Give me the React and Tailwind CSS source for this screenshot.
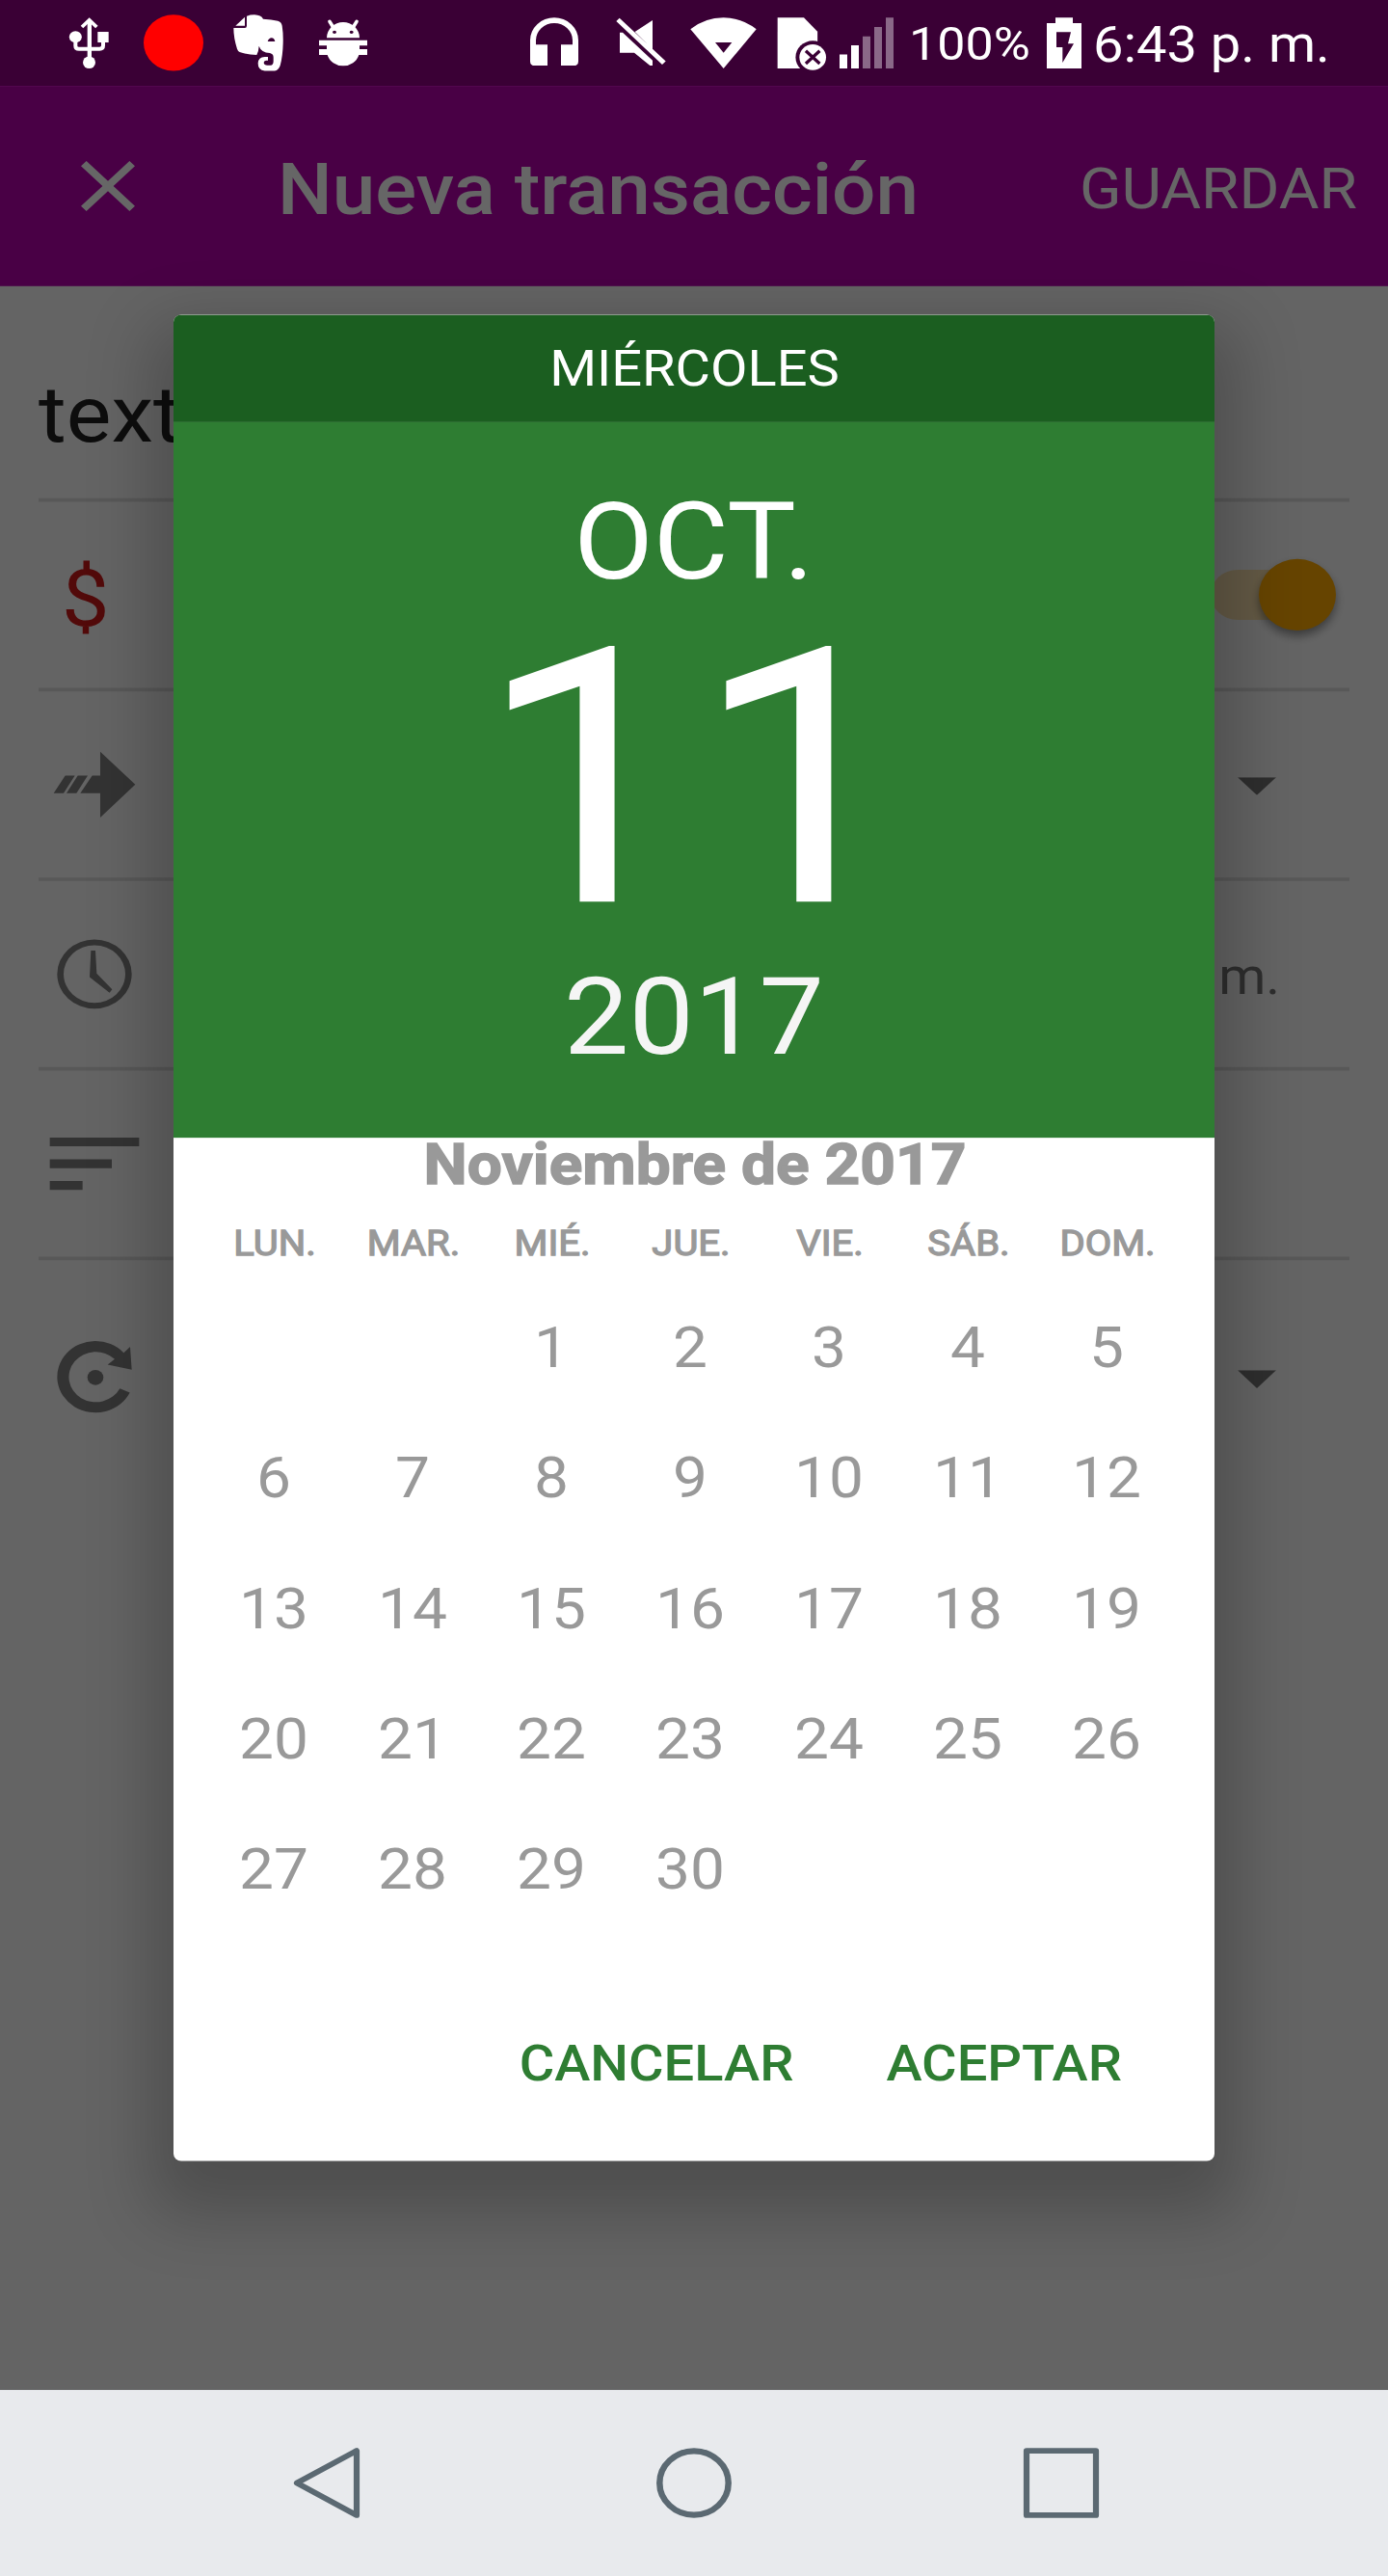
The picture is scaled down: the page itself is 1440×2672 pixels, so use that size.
import React from "react";

const WEEKDAYS = ["LUN.", "MAR.", "MIÉ.", "JUE.", "VIE.", "SÁB.", "DOM."];
const DAYS = [null, null, ...Array.from({ length: 30 }, (_, i) => i + 1)];

function Glyph({ box, className, children }) {
  return (
    <svg viewBox={box} preserveAspectRatio="none" fill="currentColor" className={`shrink-0 ${className}`}>
      {children}
    </svg>
  );
}

function StatusBar() {
  return (
    <div className="flex h-[96px] items-center bg-[#3a0035] pl-[70px] text-white">
      <Glyph box="210 0 135 267" className="h-[96px] w-[45px]">
        <rect x="272" y="66" width="13" height="124" />
        <path d="M255 84L278 62L301 84" fill="none" stroke="currentColor" strokeWidth="11" />
        <ellipse cx="277.500" cy="194" rx="19.500" ry="19" />
        <ellipse cx="235" cy="115" rx="19.500" ry="18" />
        <path d="M235 115V143Q235 152 246 152H310Q321 152 321 142V115" fill="none" stroke="currentColor" strokeWidth="12" />
        <rect x="304" y="99" width="34" height="33" />
      </Glyph>
      <Glyph box="447 0 186 267" className="ml-[34px] h-[96px] w-[62px] text-[#ff0000]">
        <ellipse cx="540" cy="133" rx="93" ry="87" />
      </Glyph>
      <Glyph box="726 0 156 267" className="ml-[31px] h-[96px] w-[52px]">
        <path d="M733 80L762 53V80Z" />
        <path
          fillRule="evenodd"
          d="M768 50Q778 46 792 46Q813 47 819 59Q845 60 865 65Q876 68 878 80Q882 105 881 135Q880 175 872 204Q867 219 855 220H824Q803 218 803 197Q804 177 824 177H834V188H828Q821 189 821 195Q822 203 832 203H842Q851 202 851 190V178Q851 168 840 165Q813 164 806 143Q805 160 799 171Q765 169 746 162Q740 159 738 152Q727 118 727 87H762Q768 87 768 80ZM833 129H856Q854 119 845 118Q837 118 833 129Z"
        />
      </Glyph>
      <Glyph box="990 0 156 267" className="ml-[36px] h-[96px] w-[52px]">
        <path fillRule="evenodd" d="M1017 118A51 49 0 0 1 1119 118ZM1035 100a6 5 0 1 0 12 0a6 5 0 1 0 -12 0ZM1088 100a6 5 0 1 0 12 0a6 5 0 1 0 -12 0Z" />
        <path d="M1026 67L1036 83M1110 67L1100 83" stroke="currentColor" strokeWidth="11" strokeLinecap="round" />
        <path d="M993 125H1143V142H1119V153H1143V171H1117A51 47 0 0 1 1019 171H993V153H1017V142H993Z" />
      </Glyph>

      <Glyph box="210 0 150 267" className="ml-[168px] h-[96px] w-[50px]">
        <path d="M210 190V125A75 70 0 0 1 360 125V190Q360 204 345 204H306V139H342V125A57 53 0 0 0 228 125V139H264V204H225Q210 204 210 190Z" />
      </Glyph>
      <Glyph box="477 0 156 267" className="ml-[39px] h-[96px] w-[52px]">
        <path d="M478 66L488 56L632 190L621 201ZM591 63V153L536 99ZM489 101H498L591 188V204H583L534 164H489Z" />
      </Glyph>
      <Glyph box="709 0 207 267" className="ml-[25px] h-[96px] w-[69px]">
        <path fillRule="evenodd" d="M710 91Q755 55 813 55Q870 55 915 91L813 213ZM787 132H839L813 164Z" />
      </Glyph>
      <Glyph box="976 0 158 267" className="ml-[21px] h-[96px] w-[52px]">
        <path d="M978 55H1061L1104 98V213H978Z" />
        <ellipse cx="1089" cy="178" rx="54" ry="51" fill="#3a0035" />
        <ellipse cx="1089" cy="178" rx="42" ry="40" />
        <path d="M1067 158L1111 198M1111 158L1067 198" stroke="#3a0035" strokeWidth="10" />
      </Glyph>
      <Glyph box="1173 0 168 267" className="ml-[13px] h-[96px] w-[56px]">
        <path d="M1173 169h24v44h-24ZM1209 141h24v72h-24Z" />
        <path fill="#8a6888" d="M1245 113h24v100h-24ZM1281 84h24v129h-24ZM1317 55h24v158h-24Z" />
      </Glyph>
      <span className="ml-[16px] w-[126px] whitespace-nowrap pt-[4px] text-[52px] leading-[92px]">100%</span>
      <Glyph box="378 0 108 267" className="ml-[17px] h-[96px] w-[36px]">
        <path fillRule="evenodd" d="M405 55H459V72H486V213H378V72H405ZM408 100H453L444 136H462L427 195V147H408Z" />
      </Glyph>
      <span className="ml-[12px] whitespace-nowrap pt-[5px] text-[56px] leading-[91px]">6:43 p. m.</span>
    </div>
  );
}

function Toolbar() {
  return (
    <div className="flex h-[224px] items-center bg-[#b600ac] pl-[64px] pr-[32px] text-white">
      <svg viewBox="0 0 24 24" fill="currentColor" className="size-[96px]">
        <path d="M19 6.410L17.590 5L12 10.590L6.410 5L5 6.410L10.590 12L5 17.590L6.410 19L12 13.410L17.590 19L19 17.590L13.410 12Z" />
      </svg>
      <span className="ml-[128px] pt-[8px] text-[80px] font-medium leading-[100px]">Nueva transacción</span>
      <span className="ml-auto pt-[8px] text-[64px] leading-[80px]">GUARDAR</span>
    </div>
  );
}

function Row({ icon, children, last }) {
  return (
    <div className={last ? "mt-[27px] flex h-[208px] items-center" : "mx-[40px] box-content flex h-[208px] items-center border-b-4 border-black/12"}>
      {icon}
      {children}
    </div>
  );
}

function Caret({ className }) {
  return (
    <svg viewBox="0 0 40 20" fill="#737373" className={`h-[20px] w-[40px] ${className}`}>
      <path d="M0 0H40L20 20Z" />
    </svg>
  );
}

function Form() {
  return (
    <div className="h-[2352px] bg-[#fafafa] text-black/54">
      <div className="mx-[40px] h-[241px] border-b-4 border-black/12 pt-[80px] text-[88px] leading-[128px] text-black/87">
        text
      </div>
      <Row icon={<span className="ml-[24px] pt-[8px] text-[88px] leading-[100px] text-[#cc1a1a]">$</span>}>
        <div className="ml-auto mr-[14px] flex h-[80px] w-[130px] items-center justify-end rounded-full">
          <div className="h-[56px] w-[90px] rounded-l-full bg-[#ffab00]/30" />
          <div className="-ml-[40px] size-[80px] shrink-0 rounded-full bg-[#ffab00] shadow-[0_6px_10px_rgba(0,0,0,0.4)]" />
        </div>
      </Row>
      <Row
        icon={
          <Glyph box="150 1186.400 288 225.200" className="ml-[10px] h-[96px] w-[96px] text-[#7f7f7f]">
            <path d="M312 1213L421 1299L312 1386V1322H250L287 1276H312ZM207 1322H238L273 1276H242ZM167 1322H198L233 1276H203Z" />
          </Glyph>
        }
      >
        <Caret className="ml-auto mr-[76px] mt-[4px]" />
      </Row>
      <Row
        icon={
          <Glyph box="150 119.100 288 232.700" className="ml-[10px] h-[96px] w-[96px] text-[#7f7f7f]">
            <path fillRule="evenodd" d="M178 235.500a116 94 0 1 0 232 0a116 94 0 1 0 -232 0ZM198 235.500a96 78 0 1 0 192 0a96 78 0 1 0 -192 0Z" />
            <path d="M283 172H297L301 234L349 277L341 286L279 244Z" />
          </Glyph>
        }
      >
        <span className="ml-auto mr-[72px] pt-[5px] text-[56px] leading-[64px]">m.</span>
      </Row>
      <Row
        icon={
          <Glyph box="150 633.600 288 232.700" className="ml-[10px] h-[96px] w-[96px] text-[#7f7f7f]">
            <path d="M155 679h278v24h-278ZM155 738h193v24h-193ZM155 797h102v24h-102Z" />
          </Glyph>
        }
      />
      <Row
        last
        icon={
          <Glyph box="150 1213.600 288 232.700" className="ml-[50px] h-[96px] w-[96px] text-[#7f7f7f]">
            <path d="M385 1263A119 97 0 1 0 404 1371L373 1360A84 68 0 1 1 357 1280L335 1295L410 1309L405 1247Z" />
            <ellipse cx="297" cy="1330" rx="25" ry="20.500" />
          </Glyph>
        }
      >
        <Caret className="ml-auto mr-[116px] mt-[3px]" />
      </Row>
    </div>
  );
}

function DatePicker() {
  return (
    <div className="flex h-[2064px] w-[1080px] flex-col overflow-hidden rounded-[8px] bg-white shadow-[0_36px_70px_24px_rgba(0,0,0,0.22)]">
      <div className="h-[120px] bg-[#1b5e20] pl-[1px] text-center text-[56px] leading-[120px] text-white">MIÉRCOLES</div>
      <div className="h-[800px] bg-[#2e7d32] pt-[64px] text-center text-white">
        <div className="text-[120px] leading-[140px]">OCT.</div>
        <div className="text-[400px] leading-[391px]">11</div>
        <div className="text-[120px] leading-[140px] text-[#f5f5f5]">2017</div>
      </div>
      <div className="pl-[2px] text-center text-[64px] font-bold leading-[62px] text-[#999999] [-webkit-text-stroke:1.5px_#999999]">
        Noviembre de 2017
      </div>
      <div className="mb-[14px] mt-[26px] grid grid-cols-7 pl-[33px] pr-[39px] text-center text-[40px] leading-[60px] text-[#999999] [-webkit-text-stroke:1.4px_#999999]">
        {WEEKDAYS.map((d) => (
          <span key={d}>{d}</span>
        ))}
      </div>
      <div className="grid grid-cols-7 pl-[32px] pr-[40px] text-center text-[64px] leading-[146px] text-[#999999]">
        {DAYS.map((d, i) => (
          <span key={i}>{d}</span>
        ))}
      </div>
      <div className="mt-[71px] flex h-[144px] items-center justify-end gap-[96px] pr-[96px] text-[56px] font-medium text-[#2e7d32]">
        <span>CANCELAR</span>
        <span>ACEPTAR</span>
      </div>
    </div>
  );
}

function NavBar() {
  return (
    <div className="flex h-[208px] items-center justify-center gap-[301px] bg-[#e8eaed]">
      <svg viewBox="0 0 80 80" className="size-[80px]" fill="none" stroke="#5b6972" strokeWidth="6.200" strokeLinejoin="round">
        <path d="M71 4V76L9 40Z" />
      </svg>
      <svg viewBox="0 0 80 80" className="size-[80px]" fill="none" stroke="#5b6972" strokeWidth="6.500">
        <circle cx="40" cy="40" r="35.700" />
      </svg>
      <svg viewBox="0 0 80 80" className="size-[80px]" fill="none" stroke="#5b6972" strokeWidth="6.200" strokeLinejoin="round">
        <rect x="4" y="4" width="72" height="72" />
      </svg>
    </div>
  );
}

export default function App() {
  return (
    <div className="h-[2672px] w-[1440px] overflow-hidden font-['Roboto',sans-serif]">
      <div className="h-[2880px] w-[1440px] origin-top scale-y-[0.9277778]">
        <StatusBar />
        <div className="relative">
          <Toolbar />
          <Form />
          <div className="absolute inset-0 flex items-center justify-center overflow-hidden bg-black/60">
            <DatePicker />
          </div>
        </div>
        <NavBar />
      </div>
    </div>
  );
}
